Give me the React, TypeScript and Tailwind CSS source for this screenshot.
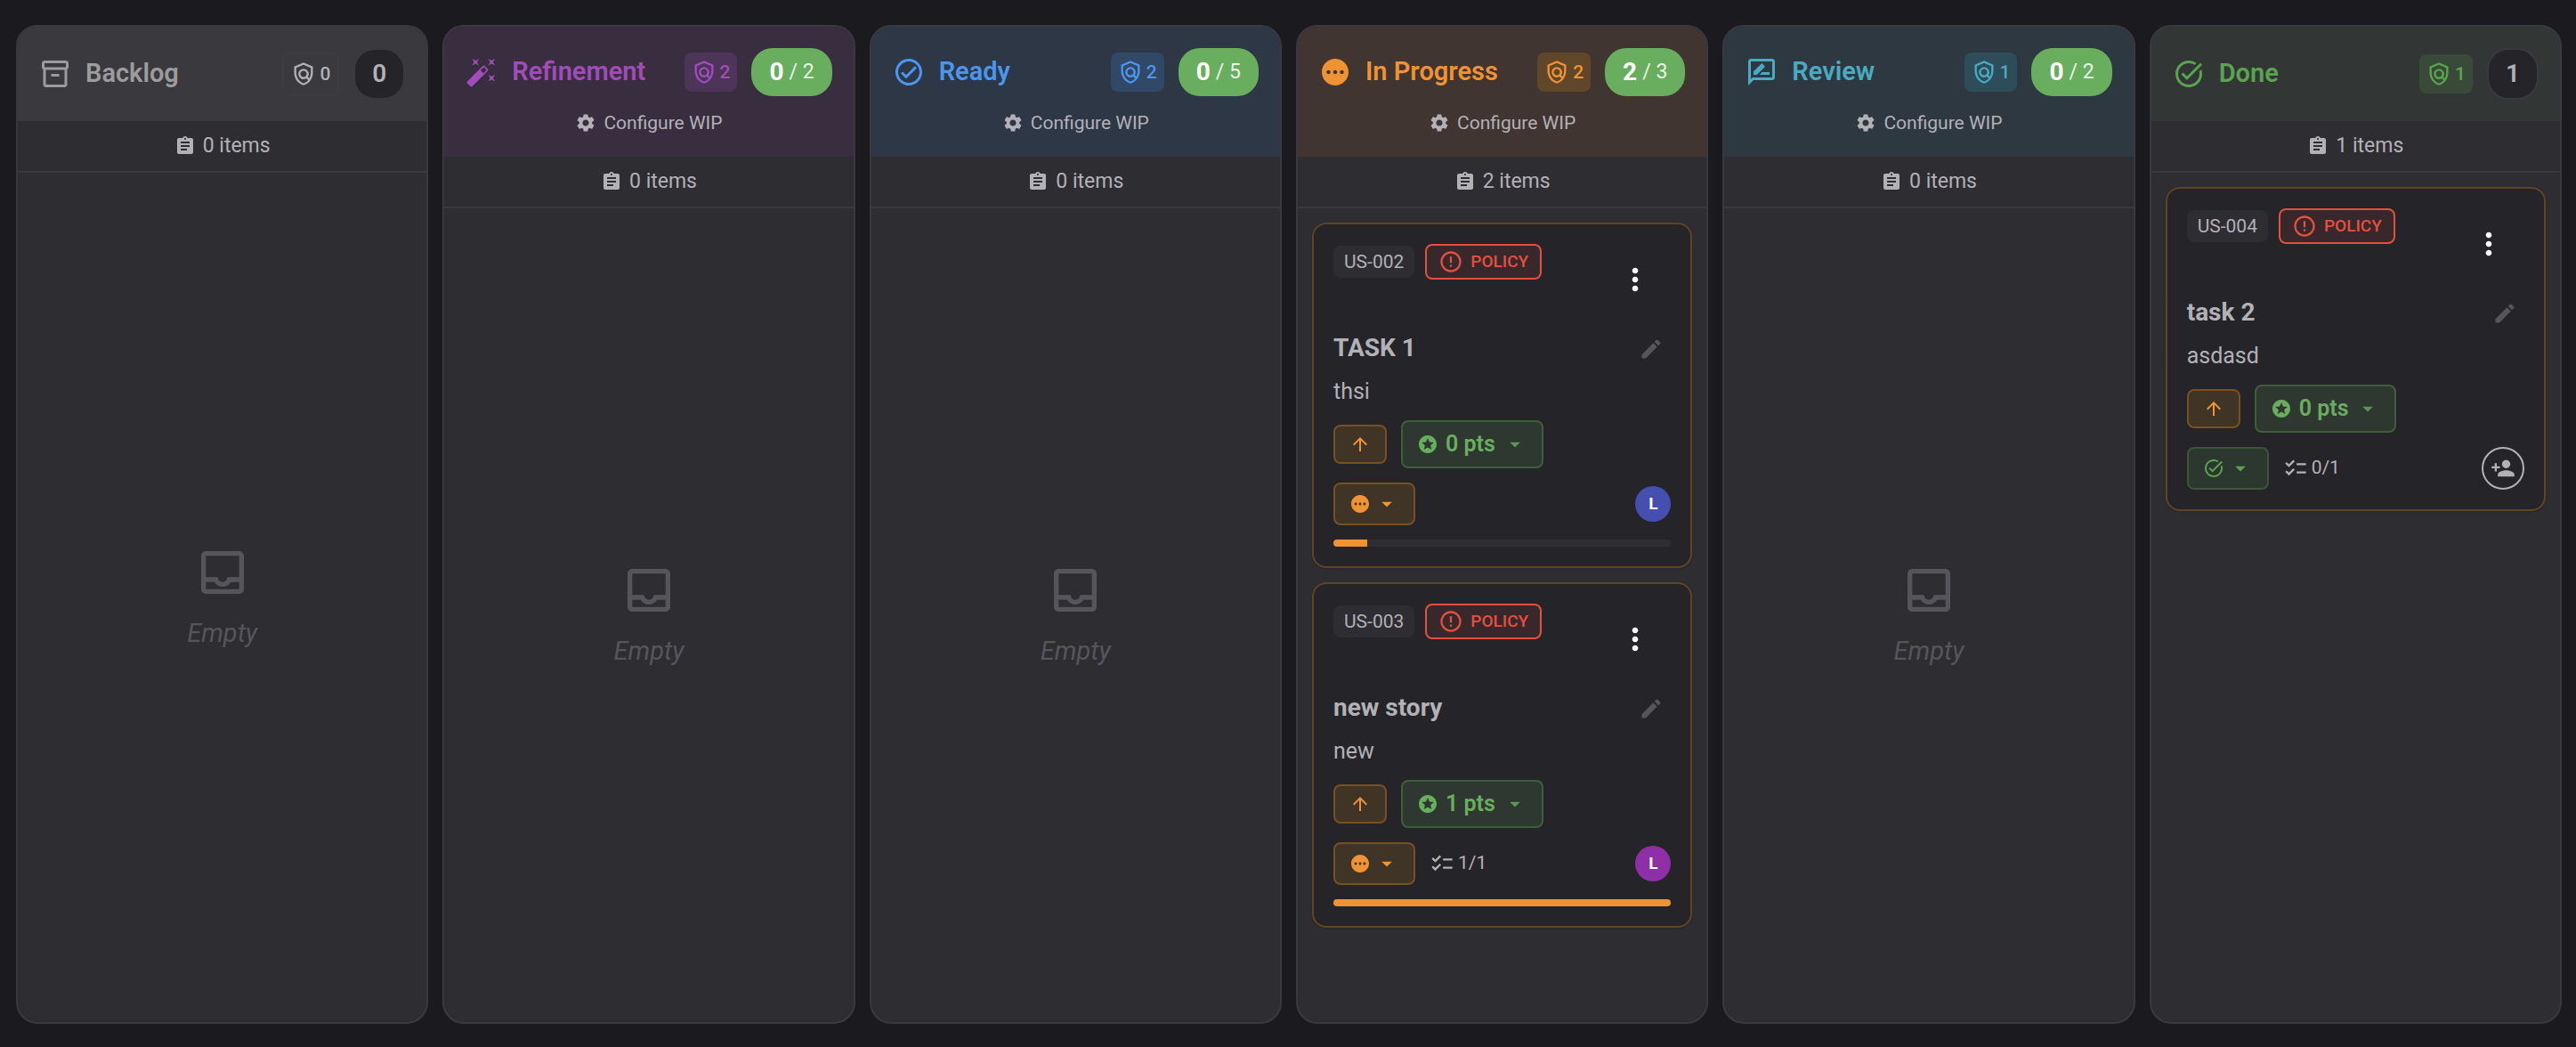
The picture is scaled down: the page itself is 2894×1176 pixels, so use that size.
import React from 'react';
import type { IconType } from 'react-icons';
import {
  MdArrowDropDown,
  MdArrowUpward,
  MdAssignment,
  MdAutoFixHigh,
  MdChecklist,
  MdEdit,
  MdErrorOutline,
  MdMoreVert,
  MdOutlineCheckCircle,
  MdOutlineInbox,
  MdOutlineInventory2,
  MdOutlinePolicy,
  MdOutlineRateReview,
  MdPending,
  MdPersonAdd,
  MdSettings,
  MdStars,
  MdTaskAlt,
} from 'react-icons/md';
import clsx from 'clsx';

interface Story {
  id: string;
  title: string;
  description: string;
  points: number;
  status: 'progress' | 'done';
  checklist?: string;
  assignee?: { initial: string; color: string };
  progress?: number;
}

interface Column {
  name: string;
  icon: IconType;
  policies: number;
  limit?: number;
  header: string;
  text: string;
  chip: string;
  stories: Story[];
}

const columns: Column[] = [
  {
    name: 'Backlog',
    icon: MdOutlineInventory2,
    policies: 0,
    header: 'bg-[#3a393e]',
    text: 'text-[#9c9c9c]',
    chip: 'border-2 border-[#3d3c42] text-[#b2b1b7]',
    stories: [],
  },
  {
    name: 'Refinement',
    icon: MdAutoFixHigh,
    policies: 2,
    limit: 2,
    header: 'bg-[#382e3f]',
    text: 'text-[#a14cb9]',
    chip: 'bg-[#4d3559] text-[#a14cb9]',
    stories: [],
  },
  {
    name: 'Ready',
    icon: MdOutlineCheckCircle,
    policies: 2,
    limit: 5,
    header: 'bg-[#2e3745]',
    text: 'text-[#4a96ee]',
    chip: 'bg-[#314866] text-[#4a96ee]',
    stories: [],
  },
  {
    name: 'In Progress',
    icon: MdPending,
    policies: 2,
    limit: 3,
    header: 'bg-[#403530]',
    text: 'text-[#ee9234]',
    chip: 'bg-[#604729] text-[#ee9234]',
    stories: [
      {
        id: 'US-002',
        title: 'TASK 1',
        description: 'thsi',
        points: 0,
        status: 'progress',
        assignee: { initial: 'L', color: 'bg-[#444fb0]' },
        progress: 10,
      },
      {
        id: 'US-003',
        title: 'new story',
        description: 'new',
        points: 1,
        status: 'progress',
        checklist: '1/1',
        assignee: { initial: 'L', color: 'bg-[#8f2fa8]' },
        progress: 100,
      },
    ],
  },
  {
    name: 'Review',
    icon: MdOutlineRateReview,
    policies: 1,
    limit: 2,
    header: 'bg-[#2e3840]',
    text: 'text-[#4aaac1]',
    chip: 'bg-[#2d4d5a] text-[#4aaac1]',
    stories: [],
  },
  {
    name: 'Done',
    icon: MdTaskAlt,
    policies: 1,
    header: 'bg-[#323735]',
    text: 'text-[#5aa350]',
    chip: 'bg-[#394b38] text-[#5aa350]',
    stories: [
      {
        id: 'US-004',
        title: 'task 2',
        description: 'asdasd',
        points: 0,
        status: 'done',
        checklist: '0/1',
      },
    ],
  },
];

const StoryCard: React.FC<{ story: Story }> = ({ story }) => {
  const done = story.status === 'done';
  const StatusIcon = done ? MdTaskAlt : MdPending;

  return (
    <article className="rounded-2xl border-2 border-[#5f4425] bg-[#252429] p-[22px] shadow-sm">
      <div className="flex items-start justify-between">
        <div className="flex items-center gap-3">
          <span className="rounded-lg bg-[#2e2d32] px-3 text-[21px] leading-9">{story.id}</span>
          <span className="flex h-10 items-center gap-2 rounded-lg border-2 border-[#e3503f] bg-[#38282b] px-[13px] text-[19px] font-medium text-[#e3503f]">
            <MdErrorOutline className="size-7" />
            POLICY
          </span>
        </div>
        <button className="grid size-20 place-items-center text-white" aria-label="Story menu">
          <MdMoreVert className="size-10" />
        </button>
      </div>

      <div className="mt-4 flex h-11 items-start justify-between">
        <h3 className="text-[28px] leading-[42px] font-bold">{story.title}</h3>
        <button className="grid size-11 place-items-center text-[#56555c]" aria-label="Edit title">
          <MdEdit className="size-7" />
        </button>
      </div>

      <p className="mt-2 text-[25px] leading-9">{story.description}</p>

      <div className="mt-[14px] flex items-center gap-4">
        <button
          className="grid h-11 w-[60px] place-items-center rounded-lg border-2 border-[#785022] bg-[#403427] text-[#ee9234]"
          aria-label="Priority"
        >
          <MdArrowUpward className="size-6" />
        </button>
        <button className="flex h-[54px] items-center gap-2 rounded-lg border-2 border-[#3e5f3e] bg-[#2e3830] px-4 text-[25px] font-semibold text-[#69ae5e]">
          <MdStars className="size-6" />
          {story.points} pts
          <MdArrowDropDown className="size-7 opacity-80" />
        </button>
      </div>

      <div className="mt-4 flex items-center">
        <button
          className={clsx(
            'flex h-12 items-center gap-1 rounded-lg border-2 px-4',
            done
              ? 'border-[#3a5638] bg-[#2c372f] text-[#5aa350]'
              : 'border-[#785022] bg-[#403427] text-[#ee9234]'
          )}
          aria-label="Status"
        >
          <StatusIcon className="size-6" />
          <MdArrowDropDown className="size-7" />
        </button>
        {story.checklist && (
          <span className="ml-4 flex items-center gap-1 text-[21px]">
            <MdChecklist className="size-7" />
            {story.checklist}
          </span>
        )}
        {story.assignee ? (
          <span
            className={clsx(
              'ml-auto grid size-10 place-items-center rounded-full text-[19px] font-bold text-white',
              story.assignee.color
            )}
          >
            {story.assignee.initial}
          </span>
        ) : (
          <button
            className="ml-auto grid size-12 place-items-center rounded-full border-2 border-[#b2b1b7]"
            aria-label="Assign"
          >
            <MdPersonAdd className="size-7" />
          </button>
        )}
      </div>

      {story.progress !== undefined && (
        <div className="mt-4 h-2 overflow-hidden rounded-full bg-[#2e2d32]">
          <div className="h-full bg-[#ee9234]" style={{ width: `${story.progress}%` }} />
        </div>
      )}
    </article>
  );
};

const BoardColumn: React.FC<{ column: Column }> = ({ column }) => {
  const Icon = column.icon;
  const count = column.stories.length;

  return (
    <section className="flex min-w-0 flex-col overflow-hidden rounded-3xl border-2 border-[#3a393f] bg-[#2e2d32]">
      <header className={clsx('p-6', column.header)}>
        <div className="flex items-center">
          <Icon className={clsx('size-9', column.text)} />
          <h2 className={clsx('ml-4 text-[29px] font-semibold', column.text)}>{column.name}</h2>
          <span
            className={clsx(
              'ml-auto flex items-center gap-1 rounded-lg px-2 text-[21px] leading-[44px] font-medium',
              column.chip
            )}
          >
            <MdOutlinePolicy className="size-7" />
            {column.policies}
          </span>
          {column.limit === undefined ? (
            <span className="ml-4 rounded-3xl border-2 border-[#3a393f] bg-[#252429] px-[19px] text-[28px] leading-[54px] font-semibold">
              {count}
            </span>
          ) : (
            <span className="ml-4 flex items-center gap-1.5 rounded-3xl bg-[#69ae5e] px-5 text-[28px] leading-[54px] font-bold text-white">
              {count}
              <span className="text-[23px] font-normal opacity-85">/ {column.limit}</span>
            </span>
          )}
        </div>
        {column.limit !== undefined && (
          <button className="mx-auto mt-4 flex items-center gap-2 text-[21px] leading-7">
            <MdSettings className="size-6" />
            Configure WIP
          </button>
        )}
      </header>

      <div className="flex h-[58px] items-center justify-center gap-2 border-b-2 border-[#3a393f] text-[23px]">
        <MdAssignment className="size-6" />
        {count} items
      </div>

      {count > 0 ? (
        <div className="flex flex-col gap-4 p-4">
          {column.stories.map((story) => (
            <StoryCard key={story.id} story={story} />
          ))}
        </div>
      ) : (
        <div className="flex flex-1 flex-col items-center justify-center gap-4 text-[#56555c]">
          <MdOutlineInbox className="size-16" />
          <p className="text-[29px] leading-10 italic">Empty</p>
        </div>
      )}
    </section>
  );
};

const App: React.FC = () => {
  return (
    <main className="grid min-h-screen grid-cols-6 gap-4 bg-[#1b1a1e] pt-7 pr-4 pb-[26px] pl-[18px] font-[Roboto,sans-serif] text-[#b2b1b7]">
      {columns.map((column) => (
        <BoardColumn key={column.name} column={column} />
      ))}
    </main>
  );
};

export default App;
